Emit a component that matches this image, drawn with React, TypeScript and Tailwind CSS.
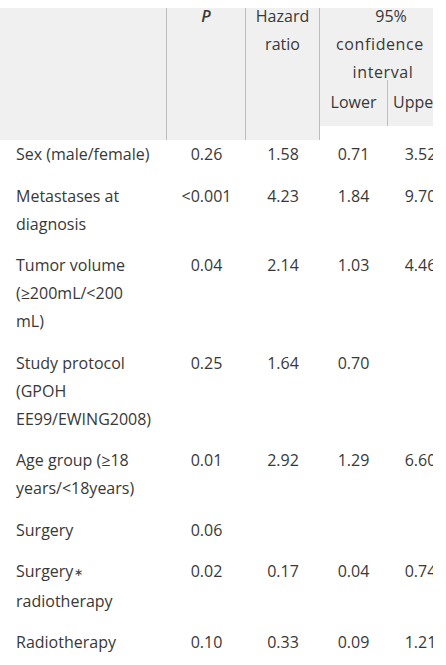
import React from "react";

type Row = { label: React.ReactNode[]; p: string; hr: string; lo: string; up: string };

const Star = () => (
  <span className="text-[11px] align-middle relative top-[-1px] ml-[1px]">∗</span>
);

const rows: Row[] = [
  { label: ["Sex (male/female)"], p: "0.26", hr: "1.58", lo: "0.71", up: "3.52" },
  { label: ["Metastases at", "diagnosis"], p: "<0.001", hr: "4.23", lo: "1.84", up: "9.70" },
  { label: ["Tumor volume", "(≥200mL/<200", "mL)"], p: "0.04", hr: "2.14", lo: "1.03", up: "4.46" },
  { label: ["Study protocol", "(GPOH", "EE99/EWING2008)"], p: "0.25", hr: "1.64", lo: "0.70", up: "" },
  { label: ["Age group (≥18", "years/<18years)"], p: "0.01", hr: "2.92", lo: "1.29", up: "6.60" },
  { label: ["Surgery"], p: "0.06", hr: "", lo: "", up: "" },
  {
    label: [
      <>
        Surgery
        <Star />
      </>,
      "radiotherapy",
    ],
    p: "0.02",
    hr: "0.17",
    lo: "0.04",
    up: "0.74",
  },
  { label: ["Radiotherapy"], p: "0.10", hr: "0.33", lo: "0.09", up: "1.21" },
];

export default function App() {
  return (
    <div
      className="w-[446px] h-[665px] bg-white pt-2 text-[16px] leading-[28px] text-[#383838] overflow-hidden"
      style={{ fontFamily: "'Open Sans', 'Noto Sans', sans-serif" }}
    >
      <div className="w-[433px] overflow-hidden">
        <div className="w-[454px]">
          {/* Header */}
          <div className="flex h-[132px]">
            <div className="w-[167px] bg-[#f0f0f0] border-r border-[#bdbdbd]" />
            <div className="w-[79px] bg-[#f0f0f0] border-r border-[#bdbdbd] text-center">
              <div className="-mt-[6px] italic font-semibold">P</div>
            </div>
            <div className="w-[74px] bg-[#f0f0f0] border-r border-[#bdbdbd] text-center">
              <div className="-mt-[6px]">
                <div>Hazard</div>
                <div>ratio</div>
              </div>
            </div>
            <div className="w-[134px] h-[118px] bg-[#f0f0f0] flex flex-col">
              <div className="h-[72px] text-center pr-[8px] whitespace-nowrap">
                <div className="-mt-[6px]">
                  <div className="pl-[16px]">95%</div>
                  <div className="-ml-[6px] tracking-[0.6px]">confidence</div>
                  <div className="tracking-[0.6px]">interval</div>
                </div>
              </div>
              <div className="flex h-[46px]">
                <div className="w-[68px] border-r border-[#bdbdbd] text-center pt-[8px]">Lower</div>
                <div className="pl-[5px] pt-[8px]">Upper</div>
              </div>
            </div>
          </div>
          {/* Body */}
          {rows.map((r, i) => (
            <div key={i} className="flex pb-[13.5px]">
              <div className="w-[167px] pl-4 whitespace-nowrap">
                {r.label.map((l, j) => (
                  <div key={j}>{l}</div>
                ))}
              </div>
              <div className="w-[79px] text-center">{r.p}</div>
              <div className="w-[74px] text-center">{r.hr}</div>
              <div className="w-[67px] text-center">{r.lo}</div>
              <div className="w-[67px] text-center">{r.up}</div>
            </div>
          ))}
        </div>
      </div>
    </div>
  );
}
